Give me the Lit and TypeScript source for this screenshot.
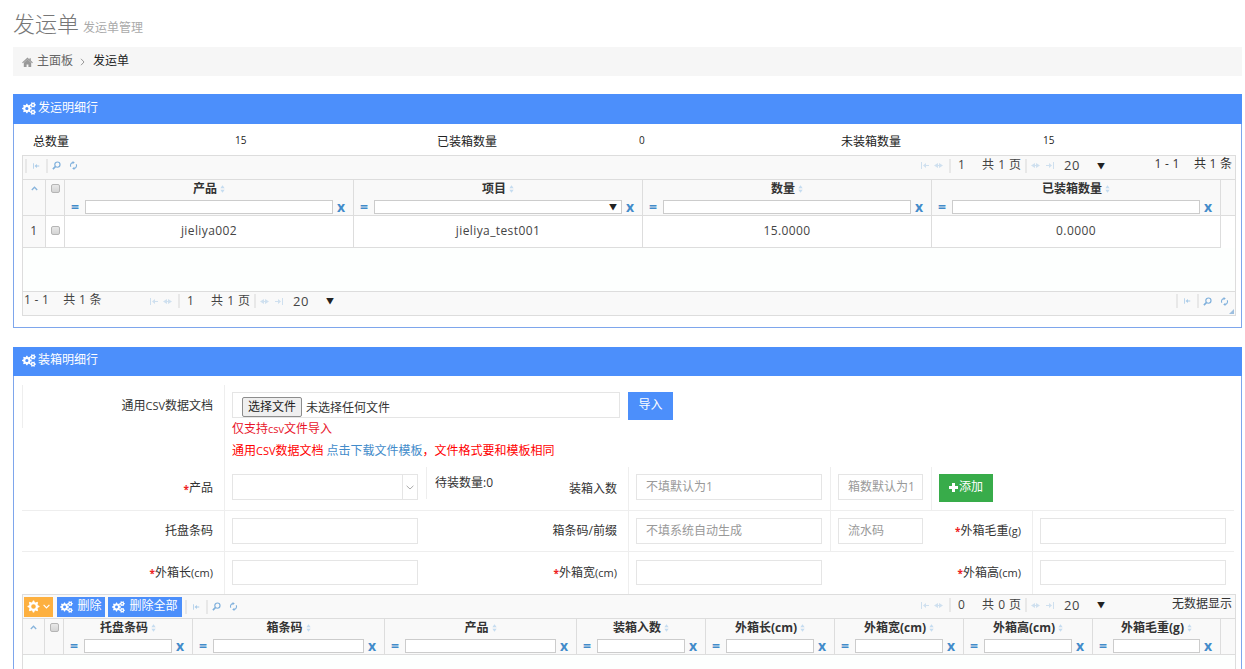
import { LitElement, html, css } from "lit";
import { customElement } from "lit/decorators.js";

function gear(cx: number, cy: number, r: number, hole: number, teeth = 8): string {
  let d = "";
  const n = teeth * 4;
  for (let i = 0; i < n; i++) {
    const a = ((i - 0.5) / n) * Math.PI * 2;
    const rad = i % 4 < 2 ? r : r * 0.76;
    d += `${i ? "L" : "M"}${(cx + Math.cos(a) * rad).toFixed(2)} ${(cy + Math.sin(a) * rad).toFixed(2)}`;
  }
  d += "Z";
  d += `M${cx - hole} ${cy}a${hole} ${hole} 0 1 0 ${hole * 2} 0a${hole} ${hole} 0 1 0 ${-hole * 2} 0Z`;
  return d;
}
const COGS = gear(5.2, 7, 5.2, 1.7) + gear(11.8, 3.1, 3.1, 0.9, 6) + gear(11.8, 10.9, 3.1, 0.9, 6);

const cogs = () => html`<svg class="cogs" viewBox="0 0 15 14" fill-rule="evenodd"><path fill="currentColor" d=${COGS}></path></svg>`;
const first = () => html`<svg class="ji" viewBox="0 0 9 7"><path fill="currentColor" d="M0 0h1v7H0zM2 3.5 5 1v2h3v1H5v2z"></path></svg>`;
const last = () => html`<svg class="ji" viewBox="0 0 9 7"><path fill="currentColor" d="M8 0h1v7H8zM7 3.5 4 1v2H1v1h3v2z"></path></svg>`;
const prev = () => html`<svg class="ji" viewBox="0 0 9 7"><path fill="currentColor" d="M0 3.5 4 1v2h1V1l4 2.5L5 6V4H4v2z"></path></svg>`;
const search = () => html`<svg class="ts" viewBox="0 0 10 10"><circle cx="6" cy="4" r="2.9" fill="none" stroke="currentColor" stroke-width="1.3"></circle><path d="M4 6 1 9" stroke="currentColor" stroke-width="1.8" fill="none"></path></svg>`;
const refresh = () => html`<svg class="ts" viewBox="0 0 10 10"><path d="M2 6.5A3.3 3.3 0 0 1 4.5 1.7M8 3.5A3.3 3.3 0 0 1 5.5 8.3" stroke="currentColor" stroke-width="1.2" fill="none"></path><path fill="currentColor" d="M4 0l2.4 1.8L4 3.6zM6 10 3.6 8.2 6 6.4z"></path></svg>`;
const leftTools = () => html`<span class="sep"></span><span class="ti">${first()}</span><span class="sep"></span><span class="ti s">${search()}</span><span class="ti s">${refresh()}</span>`;
const sortIcon = () => html`<svg class="sort" viewBox="0 0 6 9"><path fill="currentColor" d="M3 0l2.6 3.5H.4zM3 9 .4 5.5h5.2z"></path></svg>`;

interface Col { t?: string; w: number; sel?: boolean; }

const pager = (num: string, pages: string) => html`<span class="pg">
  <span class="pi a">${first()}${prev()}</span><span class="sep"></span>
  <span class="pnum">${num}</span><span class="ptot">共 ${pages} 页</span><span class="sep"></span>
  <span class="pi b">${prev()}${last()}</span>
  <span class="psize">20</span><span class="caret">▼</span>
</span>`;

const headerRow = (cols: Col[], rnw: number) => html`<div class="ghead">
  <div class="hc rn" style="width:${rnw}px"><svg class="up" viewBox="0 0 7 5"><path d="M.8 4 3.5 1.2 6.2 4" fill="none" stroke="currentColor" stroke-width="1.3"></path></svg></div>
  <div class="hc cbc" style="width:19px"><span class="cb"></span></div>
  ${cols.map((c) => html`<div class="hc" style="width:${c.w}px">
    <div class="ht"><b>${c.t}</b>${sortIcon()}</div>
    <div class="hf"><span class="eq">=</span><span class="fin">${c.sel ? html`<span class="fcaret">▼</span>` : ""}</span><span class="fx">x</span></div>
  </div>`)}
  <div class="hfill"></div>
</div>`;

const field = (ph = "", cls = "") => html`<div class="in ${cls}">${ph}</div>`;
const lab = (t: string, req = false, unit = "") => html`<div class="lab">${req ? html`<i class="req">*</i>` : ""}${t}${unit ? html`<small>${unit}</small>` : ""}</div>`;

@customElement("app-root")
export class AppRoot extends LitElement {
  static styles = css`
    :host { display: block; height: 669px; overflow: hidden; background: #fff; color: #333;
      font: 12px/1.4 "Open Sans", "Noto Sans CJK SC", sans-serif; }
    .page { padding: 0 3px 0 13px; }
    .title { height: 47px; box-sizing: border-box; padding-top: 5px; display: flex; align-items: baseline; gap: 4px; }
    .title h1 { margin: 0; font-size: 22px; font-weight: 300; line-height: 36px; color: #777; }
    .title span { font-size: 12px; color: #aaa; }
    .crumb { height: 29px; background: #f6f6f6; display: flex; align-items: center; padding-left: 9px; margin-bottom: 18px; color: #666; }
    .home { width: 11px; height: 10px; color: #999; margin-right: 4px; }
    .chev { width: 5px; height: 8px; color: #999; margin: 0 8px 0 7px; }
    .crumb b { font-weight: 400; color: #222; }
    .panel { border: 1px solid #7ea6ec; border-top: 0; margin-bottom: 19px; }
    .phead { height: 30px; margin: 0 -1px; background: #4c8ffb; color: #fff; display: flex; align-items: center; padding: 0 0 2px 9px; box-sizing: border-box; gap: 2px; }
    .phead.low { height: 29px; }
    .cogs { width: 14px; height: 13px; flex: none; }
    .pbody { padding: 0 5px 11px 8px; }
    .stats { display: grid; grid-template-columns: repeat(6, 202px); height: 31px; align-items: center; }
    .stats div { padding: 6px 0 0 11px; color: #222; }
    .stats .v { font-size: 10px; padding-top: 1px; }
    .grid { width: 1214px; box-sizing: border-box; border: 1px solid #ddd; }
    .bar { height: 23px; background: #f9f9f9; display: flex; align-items: center; justify-content: space-between; border-bottom: 1px solid #ddd; }
    .bar.t1 { padding-bottom: 4px; box-sizing: content-box; height: 19px; }
    .bar.t2 .right { padding-bottom: 3px; }
    .left { display: flex; align-items: center; padding-left: 2px; }
    .left.flush { padding: 0; }
    .sep { display: inline-block; width: 2px; height: 14px; background: #e8e8e8; flex: none; }
    .ti { width: 19px; display: inline-flex; justify-content: center; color: #a9cbe8; }
    .ti.s { width: 17px; }
    .ji { width: 7px; height: 6px; margin: 0 2px; color: #a9cbe8; flex: none; }
    .ts { width: 9px; height: 9px; color: #7fb0dc; flex: none; }
    .right { display: flex; align-items: center; }
    .pg { display: inline-flex; align-items: center; color: #444; letter-spacing: 0.6px; flex: none; }
    .pi { display: inline-flex; justify-content: space-between; flex: none; }
    .pi .ji { color: #cfe0ef; margin: 0; width: 9px; height: 7px; }
    .pi.a { width: 22px; margin-right: 6px; }
    .pi.b { width: 23px; margin-left: 4px; }
    .pnum { width: 24px; margin-left: 7px; }
    .ptot { width: 43px; white-space: pre; letter-spacing: 0; word-spacing: 1px; }
    .psize { margin-left: 10px; width: 33px; font-size: 13px; }
    .caret { font-size: 8px; color: #222; width: 10px; letter-spacing: 0; }
    .rec { width: 128px; text-align: right; padding-right: 3px; white-space: pre; word-spacing: .5px; box-sizing: border-box; position: relative; top: -1px; }
    .ghead { display: flex; height: 36px; box-sizing: border-box; background: #f9f9f9; border-bottom: 1px solid #ddd; }
    .hc { box-sizing: border-box; border-right: 1px solid #ddd; flex: none; }
    .hfill { flex: 1; }
    .rn { display: flex; justify-content: center; padding-top: 6px; color: #88b4dc; }
    .up { width: 7px; height: 5px; }
    .cbc { display: flex; justify-content: center; padding-top: 4px; }
    .cb { display: block; width: 9px; height: 9px; box-sizing: border-box; border: 1px solid #b5b5b5; border-radius: 2px; background: linear-gradient(#e8e8e8, #d4d4d4); }
    .ht { height: 19px; text-align: center; line-height: 18px; color: #333; }
    .ht b { font-weight: 700; }
    .sort { width: 5px; height: 8px; margin-left: 3px; color: #c5dcf0; }
    .hf { display: flex; align-items: center; height: 15px; }
    .eq, .fx { color: #428bca; font-weight: 700; line-height: 14px; flex: none; }
    .eq { width: 20px; font-size: 14px; text-align: center; }
    .fx { width: 20px; font-size: 14px; padding-left: 4px; box-sizing: border-box; }
    .fin { flex: 1; min-width: 0; height: 14px; box-sizing: border-box; border: 1px solid #ccc; background: #fff; display: flex; justify-content: flex-end; align-items: center; }
    .fcaret { font-size: 8px; color: #222; margin-right: 4px; line-height: 12px; }
    .grow { display: flex; height: 32px; box-sizing: border-box; border-bottom: 1px solid #ddd; width: 1198px; background: #fff; }
    .gc { box-sizing: border-box; border-right: 1px solid #ddd; flex: none; text-align: center; line-height: 30px; font-size: 12px; letter-spacing: .4px; color: #444; }
    .gc.rn2 { background: #f9f9f9; }
    .gc.c2 { display: flex; justify-content: center; align-items: center; padding-bottom: 2px; }
    .gempty { height: 43px; background: #fdfffe; border-bottom: 1px solid #ddd; }
    .foot { height: 18px; padding-bottom: 5px; background: #f9f9f9; display: flex; align-items: center; justify-content: space-between; position: relative; }
    .fleft { display: flex; align-items: center; }
    .frec { width: 127px; padding-left: 1px; white-space: pre; box-sizing: border-box; word-spacing: .5px; position: relative; top: -1px; color: #444; }
    .fright { display: flex; align-items: center; padding-right: 2px; }
    .grip { position: absolute; right: 1px; bottom: 1px; width: 5px; height: 5px; }
    .form { width: 1212px; }
    .r { display: grid; grid-template-columns: repeat(6, 202px); }
    .r > div { min-width: 0; }
    .r1 { height: 82px; margin-top: 9px; }
    .r2 { height: 44px; border-bottom: 1px solid #eee; box-sizing: border-box; }
    .r3 { height: 41px; border-bottom: 1px solid #eee; box-sizing: border-box; }
    .r4 { height: 42px; box-sizing: border-box; }
    .lab { display: flex; align-items: center; justify-content: flex-end; padding-right: 11px; color: #333; white-space: pre; }
    .lab small { font-size: 11px; }
    .cj { font-size: 11px; }
    .req { color: #e22; font-style: normal; font-weight: 700; font-size: 10px; line-height: 8px; }
    .fd { border-left: 1px solid #eee; padding: 7px 8px 0 7px; box-sizing: border-box; }
    .r4 .fd { padding-top: 8px; }
    .in { height: 26px; box-sizing: border-box; border: 1px solid #e5e5e5; background: #fff; color: #999; padding-left: 9px; line-height: 24px; white-space: pre; overflow: hidden; }
    .r4 .in { height: 25px; }
    .short { width: 85px; }
    .r1lab { height: 43px; border-left: 1px solid #eee; box-sizing: border-box; padding-bottom: 1px; }
    .span2 { grid-column: span 2; }
    .fileb { height: 26px; width: 388px; box-sizing: border-box; border: 1px solid #e5e5e5; display: flex; align-items: flex-end; padding-left: 9px; color: #333; gap: 4px; }
    .filebtn { width: 60px; height: 20px; box-sizing: border-box; border: 1px solid #8d8d8d; border-radius: 2px; background: #efefef; text-align: center; line-height: 18px; color: #222; }
    .red { color: #f00; }
    .m1 { margin-top: 3px; line-height: 16px; color: #e8142a; }
    .m2 { margin-top: 6px; line-height: 16px; }
    .m2 a { color: #428bca; margin-left: 3px; }
    .imp { width: 45px; height: 28px; background: #4c8ffb; color: #fff; text-align: center; line-height: 26px; margin-top: 7px; }
    .mid { display: flex; justify-content: space-between; align-items: stretch; }
    .wait { height: 32px; border-left: 1px solid #eee; padding: 8px 0 0 8px; box-sizing: border-box; color: #333; }
    .mid .lab { padding-top: 2px; }
    .half { grid-column: span 2; display: grid; grid-template-columns: 101px 101px; }
    .half > div { box-sizing: border-box; border-left: 1px solid #eee; padding: 7px 7px 0; }
    .half2 { display: flex; justify-content: space-between; }
    .half2 .cell { width: 101px; box-sizing: border-box; border-left: 1px solid #eee; padding: 7px 7px 0; }
    .add { width: 54px; height: 28px; background: #38ac4a; color: #fff; display: flex; align-items: center; justify-content: center; gap: 1px; padding-bottom: 1px; box-sizing: border-box; font-size: 12px; }
    .add svg { width: 9px; height: 9px; }
    .sel { display: flex; justify-content: flex-end; padding: 0; }
    .selb { width: 14px; border-left: 1px solid #e5e5e5; display: flex; align-items: center; justify-content: center; color: #aaa; }
    .selb svg { width: 8px; height: 5px; }
    .tb { display: flex; align-items: center; padding-left: 1px; gap: 3px; }
    .btn { height: 20px; background: #4c8ffb; color: #fff; display: flex; align-items: center; justify-content: center; gap: 4px; box-sizing: border-box; flex: none; }
    .w48 { width: 48px; }
    .w74 { width: 74px; }
    .btn .cogs { width: 13px; height: 12px; }
    .orange { background: #fdb03f; width: 29px; gap: 3px; margin-right: 1px; }
    .orange svg { width: 13px; height: 13px; }
    .orange .dn { width: 7px; height: 5px; }
    .gbody2 { height: 40px; background: #fdfffe; }
  `;

  render() {
    const c1: Col[] = [{ t: "产品", w: 289 }, { t: "项目", w: 289, sel: true }, { t: "数量", w: 289 }, { t: "已装箱数量", w: 289 }];
    const c2: Col[] = [
      { t: "托盘条码", w: 129 }, { t: "箱条码", w: 192 }, { t: "产品", w: 192 }, { t: "装箱入数", w: 129 },
      { t: "外箱长(cm)", w: 129 }, { t: "外箱宽(cm)", w: 129 }, { t: "外箱高(cm)", w: 129 }, { t: "外箱毛重(g)", w: 128 },
    ];
    return html`<div class="page">
      <div class="title"><h1>发运单</h1><span>发运单管理</span></div>
      <div class="crumb">
        <svg class="home" viewBox="0 0 14 13"><path fill="currentColor" d="M0 7 7 .8l2.6 2.3V1.5h1.7v3.2L14 7l-.9 1L7 2.8.9 8zM2.2 7.6 7 3.4l4.8 4.2V13H8.2V9.6H5.8V13H2.2z"></path></svg>
        主面板
        <svg class="chev" viewBox="0 0 5 8"><path d="M1 .8 4 4 1 7.2" fill="none" stroke="currentColor" stroke-width="1"></path></svg>
        <b>发运单</b>
      </div>

      <section class="panel">
        <div class="phead">${cogs()}发运明细行</div>
        <div class="pbody">
          <div class="stats">
            <div>总数量</div><div class="v">15</div>
            <div>已装箱数量</div><div class="v">0</div>
            <div>未装箱数量</div><div class="v">15</div>
          </div>
          <div class="grid">
            <div class="bar t1">
              <div class="left">${leftTools()}</div>
              <div class="right">${pager("1", "1")}<span class="rec">1 - 1    共 1 条</span></div>
            </div>
            ${headerRow(c1, 23)}
            <div class="grow">
              <div class="gc rn2" style="width:23px">1</div>
              <div class="gc c2" style="width:19px"><span class="cb"></span></div>
              <div class="gc" style="width:289px">jieliya002</div>
              <div class="gc" style="width:289px">jieliya_test001</div>
              <div class="gc" style="width:289px">15.0000</div>
              <div class="gc" style="width:289px">0.0000</div>
            </div>
            <div class="gempty"></div>
            <div class="foot">
              <div class="fleft"><span class="frec">1 - 1    共 1 条</span>${pager("1", "1")}</div>
              <div class="fright">${leftTools()}</div>
              <svg class="grip" viewBox="0 0 5 5"><path fill="#9dbfe0" d="M5 0v5H0z"></path></svg>
            </div>
          </div>
        </div>
      </section>

      <section class="panel">
        <div class="phead low">${cogs()}装箱明细行</div>
        <div class="pbody">
          <div class="form">
            <div class="r r1">
              <div class="lab r1lab">通用<span class="cj">CSV</span>数据文档</div>
              <div class="fd span2">
                <div class="fileb"><span class="filebtn">选择文件</span><span>未选择任何文件</span></div>
                <div class="m1">仅支持<span class="cj">csv</span>文件导入</div>
                <div class="m2 red">通用<span class="cj">CSV</span>数据文档<a>点击下载文件模板</a>，文件格式要和模板相同</div>
              </div>
              <div><div class="imp">导入</div></div>
            </div>
            <div class="r r2">
              ${lab("产品", true)}
              <div class="fd">
                <div class="in sel"><span class="selb"><svg viewBox="0 0 8 5"><path d="M.6.8 4 4 7.4.8" fill="none" stroke="currentColor" stroke-width="1"></path></svg></span></div>
              </div>
              <div class="mid"><div class="wait">待装数量:0</div>${lab("装箱入数")}</div>
              <div class="fd">${field("不填默认为1")}</div>
              <div class="half">
                <div>${field("箱数默认为1", "short")}</div>
                <div><div class="add"><svg viewBox="0 0 9 9"><path fill="#fff" d="M3 0h3v3h3v3H6v3H3V6H0V3h3z"></path></svg>添加</div></div>
              </div>
            </div>
            <div class="r r3">
              ${lab("托盘条码")}
              <div class="fd">${field()}</div>
              ${lab("箱条码/前缀")}
              <div class="fd">${field("不填系统自动生成")}</div>
              <div class="half2">
                <div class="cell">${field("流水码", "short")}</div>
                ${lab("外箱毛重", true, "(g)")}
              </div>
              <div class="fd">${field()}</div>
            </div>
            <div class="r r4">
              ${lab("外箱长", true, "(cm)")}
              <div class="fd">${field()}</div>
              ${lab("外箱宽", true, "(cm)")}
              <div class="fd">${field()}</div>
              ${lab("外箱高", true, "(cm)")}
              <div class="fd">${field()}</div>
            </div>
          </div>
          <div class="grid">
            <div class="bar t2">
              <div class="tb">
                <div class="btn orange">
                  <svg viewBox="0 0 13 13" fill-rule="evenodd"><path fill="#fff" d=${gear(6.5, 6.5, 6, 2.3)}></path></svg>
                  <svg class="dn" viewBox="0 0 7 5"><path d="M.6.8 3.5 3.8 6.4.8" fill="none" stroke="#fff" stroke-width="1.2"></path></svg>
                </div>
                <div class="btn w48">${cogs()}删除</div>
                <div class="btn w74">${cogs()}删除全部</div>
                <div class="left flush">${leftTools()}</div>
              </div>
              <div class="right">${pager("0", "0")}<span class="rec">无数据显示</span></div>
            </div>
            ${headerRow(c2, 22)}
            <div class="gbody2"></div>
          </div>
        </div>
      </section>
    </div>`;
  }
}
